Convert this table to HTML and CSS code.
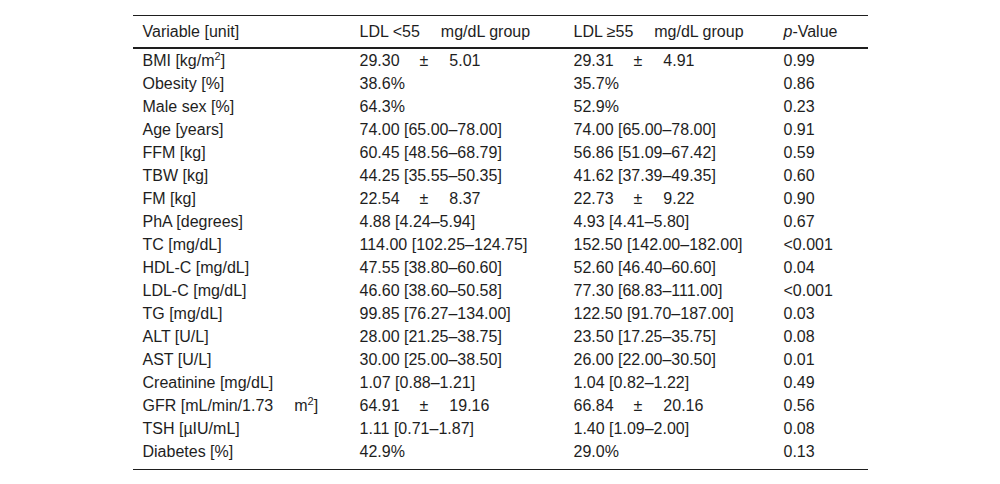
FILE: index.html
```html
<!DOCTYPE html>
<html>
<head>
<meta charset="utf-8">
<link rel="stylesheet" href="styles.css">
</head>
<body>
<div class="wrap">
<table class="data">
<thead>
<tr><th class="c1">Variable [unit]</th><th class="c2">LDL &lt;55<span class="sp"></span>mg/dL group</th><th class="c3">LDL ≥55<span class="sp"></span>mg/dL group</th><th class="c4"><i>p</i>-Value</th></tr>
</thead>
<tbody>
<tr><td>BMI [kg/m<sup>2</sup>]</td><td>29.30<span class="pm">±</span>5.01</td><td>29.31<span class="pm">±</span>4.91</td><td>0.99</td></tr>
<tr><td>Obesity [%]</td><td>38.6%</td><td>35.7%</td><td>0.86</td></tr>
<tr><td>Male sex [%]</td><td>64.3%</td><td>52.9%</td><td>0.23</td></tr>
<tr><td>Age [years]</td><td>74.00 [65.00–78.00]</td><td>74.00 [65.00–78.00]</td><td>0.91</td></tr>
<tr><td>FFM [kg]</td><td>60.45 [48.56–68.79]</td><td>56.86 [51.09–67.42]</td><td>0.59</td></tr>
<tr><td>TBW [kg]</td><td>44.25 [35.55–50.35]</td><td>41.62 [37.39–49.35]</td><td>0.60</td></tr>
<tr><td>FM [kg]</td><td>22.54<span class="pm">±</span>8.37</td><td>22.73<span class="pm">±</span>9.22</td><td>0.90</td></tr>
<tr><td>PhA [degrees]</td><td>4.88 [4.24–5.94]</td><td>4.93 [4.41–5.80]</td><td>0.67</td></tr>
<tr><td>TC [mg/dL]</td><td>114.00 [102.25–124.75]</td><td>152.50 [142.00–182.00]</td><td>&lt;0.001</td></tr>
<tr><td>HDL-C [mg/dL]</td><td>47.55 [38.80–60.60]</td><td>52.60 [46.40–60.60]</td><td>0.04</td></tr>
<tr><td>LDL-C [mg/dL]</td><td>46.60 [38.60–50.58]</td><td>77.30 [68.83–111.00]</td><td>&lt;0.001</td></tr>
<tr><td>TG [mg/dL]</td><td>99.85 [76.27–134.00]</td><td>122.50 [91.70–187.00]</td><td>0.03</td></tr>
<tr><td>ALT [U/L]</td><td>28.00 [21.25–38.75]</td><td>23.50 [17.25–35.75]</td><td>0.08</td></tr>
<tr><td>AST [U/L]</td><td>30.00 [25.00–38.50]</td><td>26.00 [22.00–30.50]</td><td>0.01</td></tr>
<tr><td>Creatinine [mg/dL]</td><td>1.07 [0.88–1.21]</td><td>1.04 [0.82–1.22]</td><td>0.49</td></tr>
<tr><td>GFR [mL/min/1.73<span class="sp2"></span>m<sup>2</sup>]</td><td>64.91<span class="pm">±</span>19.16</td><td>66.84<span class="pm">±</span>20.16</td><td>0.56</td></tr>
<tr><td>TSH [µIU/mL]</td><td>1.11 [0.71–1.87]</td><td>1.40 [1.09–2.00]</td><td>0.08</td></tr>
<tr><td>Diabetes [%]</td><td>42.9%</td><td>29.0%</td><td>0.13</td></tr>
</tbody>
</table>
</div>
</body>
</html>
```
FILE: styles.css
```css
html, body {
  margin: 0;
  padding: 0;
  background: #fff;
}
body {
  font-family: "Liberation Sans", Arial, sans-serif;
  font-size: 16px;
  color: #1e1e1e;
}
.wrap {
  width: 735px;
  margin: 15px auto 0;
  border-top: 1px solid #1e1e1e;
  border-bottom: 1px solid #1e1e1e;
  padding-bottom: 6px;
}
.data {
  width: 100%;
  border-collapse: collapse;
  table-layout: fixed;
}
.data th, .data td {
  text-align: left;
  font-weight: normal;
  padding: 0 0 0 10px;
  white-space: nowrap;
  line-height: 18px;
}
.data th {
  height: 31px;
  border-bottom: 2px solid #1e1e1e;
}
.data td {
  height: 23px;
}
.c1 { width: 207px; }
.c2 { width: 204px; }
.c3 { width: 200px; }
.c4 { width: 84px; }
.sp {
  display: inline-block;
  width: 21px;
}
.sp2 {
  display: inline-block;
  width: 21px;
}
.pm {
  display: inline-block;
  margin: 0 21px 0 20px;
}
sup {
  font-size: 11px;
  line-height: 0;
  vertical-align: 6px;
}
```
